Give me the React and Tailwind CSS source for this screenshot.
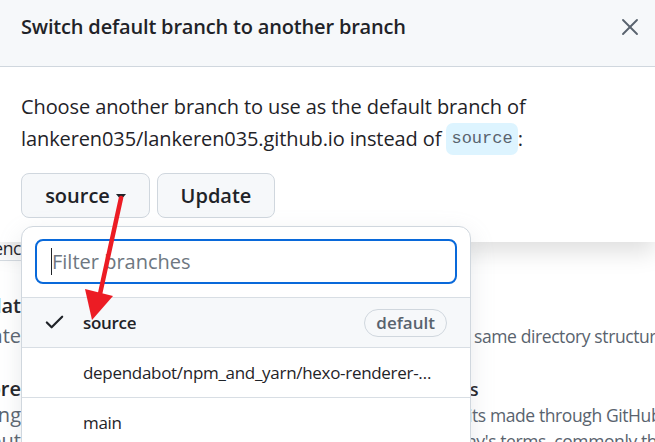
import { Check, X } from 'lucide-react';

const sans = "font-['Open_Sans','Noto_Sans',sans-serif]";
const mono = "font-['Liberation_Mono','DejaVu_Sans_Mono',monospace]";

// page rows peeking out from under the dialog and the branch menu
const pageRows = [
  { h: 'h-[30px]', left: 'Templat', leftBold: true, right: '', pad: 'ml-[453px]', rightBold: false },
  { h: 'h-[30px]', left: 'Create', leftBold: false, right: 'same directory structure and files.', pad: 'ml-[453px]', rightBold: false },
  { h: 'h-[25px]', left: '', leftBold: false, right: '', pad: '', rightBold: false },
  { h: 'h-[26px]', left: 'Before', leftBold: true, right: 's', pad: 'ml-[449px]', rightBold: true },
  { h: 'h-[26px]', left: 'Enabling', leftBold: false, right: 'its made through GitHub\'s web interface.', pad: 'ml-[447px]', rightBold: false },
  { h: 'h-[26px]', left: 'about', leftBold: false, right: 'ny\'s terms, commonly the Developer', pad: 'ml-[445px]', rightBold: false },
];

function BranchRow({ name, selected, isDefault }) {
  return (
    <div className={`flex items-center h-[50px] border-b border-[#d8dee4] pr-[23px] ${selected ? 'bg-[#f6f8fa]' : ''}`}>
      <div className="w-[61px] pl-[21px] shrink-0 flex">
        {selected && <Check size={23} strokeWidth={2.3} className="text-[#1f2328]" />}
      </div>
      <span className={`max-w-[360px] truncate text-[17px] tracking-[-0.3px] text-[#1f2328] ${selected ? 'font-semibold' : ''}`}>
        {name}
      </span>
      {isDefault && (
        <span className="ml-auto h-[28px] px-[11px] flex items-center rounded-full border border-[#d0d7de] text-[17px] font-semibold text-[#59636e]">
          default
        </span>
      )}
    </div>
  );
}

export default function App() {
  return (
    <div className={`relative w-[655px] h-[442px] overflow-hidden bg-white ${sans}`}>
      {/* Settings page behind the dialog */}
      <div className="pt-[236px] text-[17.5px] tracking-[-0.4px]">
        <div className="flex h-[24px] items-center">
          <div className="w-[21px] overflow-hidden flex justify-end whitespace-nowrap text-[#1f2328]">Referenc</div>
        </div>
        <div className="w-[21px] border-b border-[#d8dee4]" />
        <div className="h-[30px]" />
        {pageRows.map((r, i) => (
          <div key={i} className={`flex items-center ${r.h} whitespace-nowrap`}>
            <div className={`w-[21px] shrink-0 overflow-hidden flex justify-end text-[20px] tracking-normal ${r.leftBold ? 'font-semibold text-[#1f2328]' : 'text-[#59636e]'}`}>
              {r.left}
            </div>
            <div className={`${r.pad} ${r.rightBold ? 'font-semibold text-[#1f2328]' : 'text-[#59636e]'}`}>{r.right}</div>
          </div>
        ))}
      </div>

      {/* Dialog */}
      <div className="absolute top-0 left-0 right-0 bg-white shadow-[0_10px_22px_rgba(0,0,0,0.13)]">
        <div className="h-[67px] bg-[#f6f8fa] border-b border-[#d0d7de] flex items-start justify-between pl-[21px] pr-[11px] pt-[12px]">
          <h2 className="text-[20px] leading-[30px] font-semibold tracking-[-0.18px] text-[#1f2328]">
            Switch default branch to another branch
          </h2>
          <button className="mt-[1px] text-[#59636e]">
            <X size={28} strokeWidth={1.6} />
          </button>
        </div>
        <div className="px-[21px] pt-[24px] pb-[24px]">
          <p className="text-[20px] leading-[32px] tracking-[-0.1px] text-[#1f2328]">
            Choose another branch to use as the default branch of
            <br />
            lankeren035/lankeren035.github.io instead of{' '}
            <code className={`${mono} inline-block h-[32px] align-top leading-[32px] px-[5px] rounded-[7px] bg-[#ddf4ff] text-[17px] tracking-normal text-[#59636e]`}>
              source
            </code>
            :
          </p>
          <div className="mt-[18px] flex gap-[7px]">
            <button className="h-[45px] w-[129px] flex items-center justify-center gap-[6px] rounded-[8px] border border-[#d0d7de] bg-[#f6f8fa] text-[20px] font-semibold text-[#1f2328]">
              source
              <span className="w-0 h-0 border-l-[5px] border-r-[5px] border-t-[6px] border-l-transparent border-r-transparent border-t-[#1f2328] mt-[3px]" />
            </button>
            <button className="h-[45px] w-[118px] rounded-[8px] border border-[#d0d7de] bg-[#f6f8fa] text-[20px] font-semibold text-[#1f2328]">
              Update
            </button>
          </div>
        </div>
      </div>

      {/* Branch menu */}
      <div className="absolute left-[21px] top-[226px] w-[450px] h-[240px] bg-white border border-[#d0d7de] rounded-[12px] shadow-[0_8px_24px_rgba(140,149,159,0.2)]">
        <div className="px-[13px] pt-[12px] pb-[13px]">
          <div className="h-[45px] rounded-[8px] border-2 border-[#0969da] flex items-center pl-[14px]">
            <span className="w-px h-[27px] bg-[#1f2328]" />
            <span className="text-[20px] text-[#6e7781]">Filter branches</span>
          </div>
        </div>
        <div className="border-t border-[#d8dee4]">
          <BranchRow name="source" selected isDefault />
          <BranchRow name="dependabot/npm_and_yarn/hexo-renderer-marked-4.0.0" />
          <BranchRow name="main" />
        </div>
      </div>

      {/* Red annotation arrow */}
      <svg className="absolute inset-0 pointer-events-none" width="655" height="442" viewBox="0 0 655 442">
        <line x1="121" y1="198" x2="100" y2="294" stroke="#ec1c24" strokeWidth="4.5" strokeLinecap="round" />
        <polygon points="85,289 113,296 92,320" fill="#ec1c24" />
      </svg>
    </div>
  );
}
